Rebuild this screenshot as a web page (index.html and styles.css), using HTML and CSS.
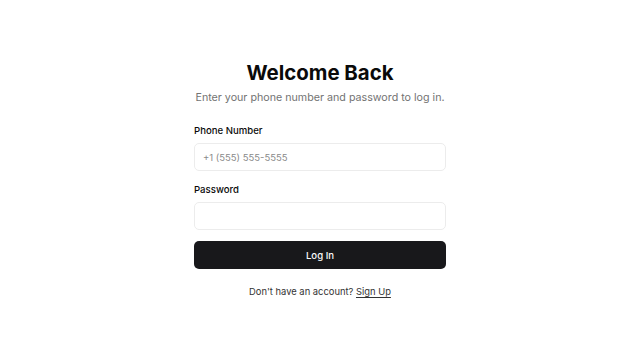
FILE: index.html
```html
<!DOCTYPE html>
<html lang="en">
<head>
<meta charset="utf-8">
<title>Log In</title>
<link rel="stylesheet" href="styles.css">
</head>
<body>
<main class="page">
  <form class="card">
    <h1 class="title">Welcome Back</h1>
    <p class="subtitle">Enter your phone number and password to log in.</p>
    <div class="field">
      <label class="label" for="phone">Phone Number</label>
      <input class="input" id="phone" type="tel" placeholder="+1 (555) 555-5555">
    </div>
    <div class="field">
      <label class="label" for="password">Password</label>
      <input class="input" id="password" type="password">
    </div>
    <button class="button" type="button">Log In</button>
    <p class="footer">Don't have an account? <a class="link" href="#">Sign Up</a></p>
  </form>
</main>
</body>
</html>
```

FILE: styles.css
```css
* { box-sizing: border-box; }
html, body { margin: 0; padding: 0; }
body {
  font-family: Inter, "Liberation Sans", sans-serif;
  background: #ffffff;
  color: #0a0a0a;
}
.page {
  height: 357px;
  padding-top: 2px;
  display: flex;
  align-items: center;
  justify-content: center;
}
.card {
  width: 252px;
  display: flex;
  flex-direction: column;
}
.title {
  margin: 0;
  text-align: center;
  font-size: 20.4px;
  line-height: 24px;
  font-weight: 700;
  color: #0a0a0a;
}
.subtitle {
  margin: 5px 0 0;
  text-align: center;
  font-size: 10.7px;
  line-height: 16px;
  color: #737373;
  white-space: nowrap;
}
.field {
  display: flex;
  flex-direction: column;
  gap: 6px;
  margin-top: 18px;
}
.field + .field { margin-top: 12px; }
.label {
  padding-top: 1px;
  font-size: 9.6px;
  line-height: 12px;
  font-weight: 500;
  color: #0a0a0a;
}
.input {
  height: 28px;
  border: 1px solid #ececec;
  border-radius: 5px;
  padding: 0 8px;
  font-family: inherit;
  font-size: 9.5px;
  color: #0a0a0a;
  background: #fff;
  outline: none;
}
.input::placeholder { color: #8a8a8a; }
.button {
  margin-top: 11px;
  height: 28px;
  border: none;
  border-radius: 5px;
  background: #18181b;
  color: #fafafa;
  font-family: inherit;
  font-size: 9.6px;
  font-weight: 500;
}
.footer {
  margin: 17px 0 0;
  text-align: center;
  font-size: 9.4px;
  line-height: 12px;
  color: #333333;
}
.link {
  color: #333333;
  text-decoration: underline;
  text-underline-offset: 2px;
}
```
